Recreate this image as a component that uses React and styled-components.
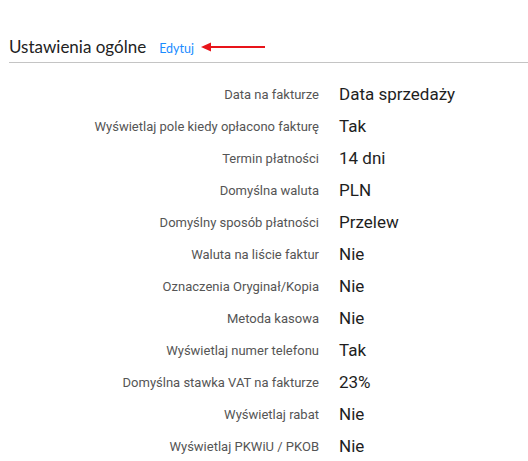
import React from 'react';
import styled, { createGlobalStyle } from 'styled-components';

const GlobalStyle = createGlobalStyle`
    body {
        margin: 0;
        background: #fff;
        font-family: Roboto, "Noto Sans", sans-serif;
    }
`

const settings = [
    ['Data na fakturze', 'Data sprzedaży'],
    ['Wyświetlaj pole kiedy opłacono fakturę', 'Tak'],
    ['Termin płatności', '14 dni'],
    ['Domyślna waluta', 'PLN'],
    ['Domyślny sposób płatności', 'Przelew'],
    ['Waluta na liście faktur', 'Nie'],
    ['Oznaczenia Oryginał/Kopia', 'Nie'],
    ['Metoda kasowa', 'Nie'],
    ['Wyświetlaj numer telefonu', 'Tak'],
    ['Domyślna stawka VAT na fakturze', '23%'],
    ['Wyświetlaj rabat', 'Nie'],
    ['Wyświetlaj PKWiU / PKOB', 'Nie'],
]

const Arrow = () => (
    <svg width="64" height="10" viewBox="0 0 64 10">
        <line x1="6" y1="5" x2="64" y2="5" stroke="#e8141a" strokeWidth="2" />
        <polygon points="0,5 10,0.5 10,9.5" fill="#e8141a" />
    </svg>
)

export default function App() {
    return (
        <>
            <GlobalStyle />
            <Page>
                <Header>
                    <Title>Ustawienia ogólne</Title>
                    <EditLink href="#">Edytuj</EditLink>
                    <Arrow />
                </Header>
                <List>
                    {settings.map(([label, value]) => (
                        <Row key={label}>
                            <Label>{label}</Label>
                            <Value>{value}</Value>
                        </Row>
                    ))}
                </List>
            </Page>
        </>
    )
}

const Page = styled.div`
    padding-left: 9px;
`

const Header = styled.div`
    height: 63px;
    display: flex;
    align-items: flex-end;
    padding-bottom: 5px;
    box-sizing: border-box;
    border-bottom: 1px solid #c4c4c4;
    svg {
        margin-left: 7px;
        margin-bottom: 5px;
    }
`

const Title = styled.h2`
    margin: 0;
    font-family: Lato, "Noto Sans", sans-serif;
    font-weight: 400;
    font-size: 17px;
    color: #222;
`

const EditLink = styled.a`
    margin-left: 13px;
    margin-bottom: 1px;
    font-family: Lato, "Noto Sans", sans-serif;
    font-size: 12.5px;
    color: #1a8cff;
    text-decoration: none;
`

const List = styled.div`
    padding-top: 15px;
    display: grid;
    grid-template-columns: 310px 1fr;
    column-gap: 20px;
`

const Row = styled.div`
    display: contents;
`

const Label = styled.div`
    height: 32px;
    display: flex;
    align-items: center;
    justify-content: flex-end;
    font-size: 13px;
    color: #555;
`

const Value = styled.div`
    height: 32px;
    display: flex;
    align-items: center;
    font-size: 17px;
    color: #1e1e1e;
`
